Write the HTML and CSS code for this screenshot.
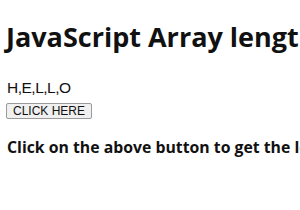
FILE: index.html
```html
<!DOCTYPE html>
<html lang="en">
  <head>
    <meta charset="UTF-8" />
    <title>JavaScript Array length</title>
    <link rel="stylesheet" href="styles.css">
  </head>
  <body>
    <h1>JavaScript Array length</h1>
    <div class="result">H,E,L,L,O</div>
    <button class="btn">CLICK HERE</button>
    <p class="note">Click on the above button to get the length of the array</p>
  </body>
</html>
```

FILE: styles.css
```css
body {
  margin: 0;
  padding: 0 6px;
  font-family: "Open Sans", sans-serif;
  color: #111;
  white-space: nowrap;
  overflow: hidden;
}

h1 {
  font-size: 27px;
  margin: 18px 0 23.5px;
}

.result {
  font-family: "Liberation Sans", Arial, sans-serif;
  font-size: 15.5px;
  letter-spacing: -0.5px;
  padding-left: 1px;
}

.btn {
  display: block;
  font-family: "Liberation Sans", Arial, sans-serif;
  font-size: 12px;
  color: #111;
  padding: 0 6px;
  margin-top: 6px;
  border: 1px solid #9a9a9a;
  border-radius: 2px;
  background: #f0f0f0;
}

.note {
  font-size: 15.8px;
  font-weight: bold;
  margin: 17.5px 0 0 1px;
}
```
